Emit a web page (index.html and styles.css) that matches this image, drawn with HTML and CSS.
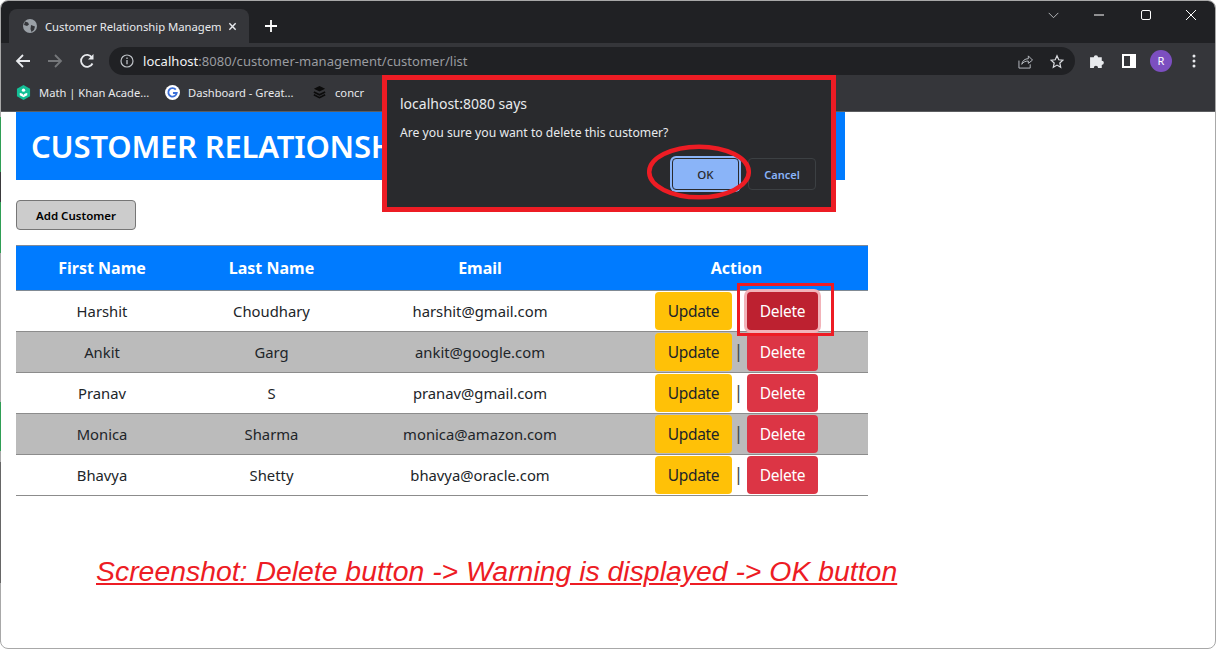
FILE: index.html
```html
<!DOCTYPE html>
<html lang="en">
<head>
<meta charset="utf-8">
<title>Customer Relationship Management</title>
<link rel="stylesheet" href="styles.css">
</head>
<body>
<div class="window">
  <div class="tabstrip">
    <div class="tab">
      <svg class="favicon" viewBox="0 0 16 16"><circle cx="8" cy="8" r="7" fill="#9aa0a6"/><path d="M3 3.500l3 1 1 2-2 1.500-3-1zM9 7l4 1.500-1 3.500-2.500 2-1-3z" fill="#35363a"/></svg>
      <span class="tab-title">Customer Relationship Managem</span>
      <svg class="tab-close" viewBox="0 0 10 10"><path d="M1.500 1.500l7 7M8.500 1.500l-7 7" stroke="#e8eaed" stroke-width="1.600"/></svg>
    </div>
    <svg class="newtab" viewBox="0 0 12 12"><path d="M6 0v12M0 6h12" stroke="#fff" stroke-width="1.800"/></svg>
    <div class="wincontrols">
      <svg class="wc wc-chev" viewBox="0 0 12 8"><path d="M.5 1l5.500 5.500L11.500 1" fill="none" stroke="#c8cacd"/></svg>
      <svg class="wc wc-min" viewBox="0 0 12 12"><path d="M1 6h10" stroke="#fff"/></svg>
      <svg class="wc wc-max" viewBox="0 0 12 12"><rect x="1.500" y="1.500" width="9" height="9" rx="1.500" fill="none" stroke="#fff"/></svg>
      <svg class="wc wc-x" viewBox="0 0 12 12"><path d="M1 1l10 10M11 1L1 11" stroke="#fff"/></svg>
    </div>
  </div>
  <div class="toolbar">
    <svg class="nav" viewBox="0 0 16 16"><path d="M15 8H2M8 2L2 8l6 6" fill="none" stroke="#e8eaed" stroke-width="1.800"/></svg>
    <svg class="nav" viewBox="0 0 16 16"><path d="M1 8h13M8 2l6 6-6 6" fill="none" stroke="#75777a" stroke-width="1.800"/></svg>
    <svg class="nav" viewBox="0 0 16 16"><path d="M13.500 10.500A6 6 0 1 1 13 4.500" fill="none" stroke="#e8eaed" stroke-width="1.800"/><path d="M14.500 1v5.500H9z" fill="#e8eaed"/></svg>
    <div class="omnibox">
      <svg class="info" viewBox="0 0 14 14"><circle cx="7" cy="7" r="6" fill="none" stroke="#bdc1c6" stroke-width="1.200"/><path d="M7 6v4.200M7 3.500v1.400" stroke="#bdc1c6" stroke-width="1.300"/></svg>
      <span class="url"><span class="host">localhost</span>:8080/customer-management/customer/list</span>
      <svg class="omni-ico share" viewBox="0 0 16 16"><path d="M1 7v8h12v-4" fill="none" stroke="#bdc1c6"/><path d="M4 11c.5-4 3.500-6 7-6V2l4.500 4.500L11 10V7.500c-3 0-5.500 1-7 3.500z" fill="none" stroke="#bdc1c6"/></svg>
      <svg class="omni-ico star" viewBox="0 0 16 16"><path d="M8 1.500l2 4.500 4.800.5-3.600 3.200 1 4.800L8 12.100 3.800 14.500l1-4.800L1.200 6.500 6 6z" fill="none" stroke="#dadce0" stroke-width="1.400"/></svg>
    </div>
    <svg class="tool puzzle" viewBox="0 0 16 16"><path d="M1 5h3.500a2 2 0 1 1 4 0H12v3.200a2 2 0 1 1 0 4V15H8.500a2 2 0 1 0-4 0H1z" fill="#e8eaed" transform="translate(0 -1)"/></svg>
    <svg class="tool panel" viewBox="0 0 14 14"><path d="M0 0h14v14H0z" fill="#fff"/><path d="M2 2h6v10H2z" fill="#35363a"/></svg>
    <div class="avatar">R</div>
    <svg class="tool dots" viewBox="0 0 4 14"><circle cx="2" cy="2" r="1.500" fill="#e8eaed"/><circle cx="2" cy="7" r="1.500" fill="#e8eaed"/><circle cx="2" cy="12" r="1.500" fill="#e8eaed"/></svg>
  </div>
  <div class="bookmarks">
    <div class="bm bm-khan">
      <svg class="bm-ico" viewBox="0 0 16 16"><path d="M8 0l7 4v8l-7 4-7-4V4z" fill="#14bf96"/><path d="M4 8.500c2 0 4 1 4 3 0-2 2-3 4-3v2.500l-4 2-4-2z" fill="#fff"/><circle cx="8" cy="5.500" r="1.800" fill="#fff"/></svg>
      <span>Math | Khan Acade...</span>
    </div>
    <div class="bm bm-great">
      <svg class="bm-ico" viewBox="0 0 16 16"><circle cx="8" cy="8" r="8" fill="#fff"/><path d="M11.500 5a4.500 4.500 0 1 0 1 3.500H8.500" fill="none" stroke="#3b6fd8" stroke-width="2"/></svg>
      <span>Dashboard - Great...</span>
    </div>
    <div class="bm bm-concr">
      <svg class="bm-ico" viewBox="0 0 16 16"><path d="M8 1l6 3-6 3-6-3z" fill="#0b0b0b"/><path d="M2 7.500l6 3 6-3M2 10.500l6 3 6-3" fill="none" stroke="#0b0b0b" stroke-width="1.800"/></svg>
      <span>concr</span>
    </div>
  </div>
  <main class="page">
    <header class="banner"><h1>CUSTOMER RELATIONSH</h1></header>
    <button class="add-btn">Add Customer</button>
    <table class="customers">
      <thead>
        <tr><th class="c1">First Name</th><th class="c2">Last Name</th><th class="c3">Email</th><th class="c4">Action</th></tr>
      </thead>
      <tbody>
        <tr><td>Harshit</td><td>Choudhary</td><td>harshit@gmail.com</td><td><div class="actions"><a class="btn update">Update</a><span class="sep"></span><a class="btn delete focused">Delete</a></div></td></tr>
        <tr class="alt"><td>Ankit</td><td>Garg</td><td>ankit@google.com</td><td><div class="actions"><a class="btn update">Update</a><span class="sep">|</span><a class="btn delete">Delete</a></div></td></tr>
        <tr><td>Pranav</td><td>S</td><td>pranav@gmail.com</td><td><div class="actions"><a class="btn update">Update</a><span class="sep">|</span><a class="btn delete">Delete</a></div></td></tr>
        <tr class="alt"><td>Monica</td><td>Sharma</td><td>monica@amazon.com</td><td><div class="actions"><a class="btn update">Update</a><span class="sep">|</span><a class="btn delete">Delete</a></div></td></tr>
        <tr><td>Bhavya</td><td>Shetty</td><td>bhavya@oracle.com</td><td><div class="actions"><a class="btn update">Update</a><span class="sep">|</span><a class="btn delete">Delete</a></div></td></tr>
      </tbody>
    </table>
    <p class="caption">Screenshot: Delete button -&gt; Warning is displayed -&gt; OK button</p>
  </main>

  <div class="left-edge"></div>
  <div class="dialog">
    <div class="dlg-title">localhost:8080 says</div>
    <div class="dlg-msg">Are you sure you want to delete this customer?</div>
    <div class="dlg-actions">
      <button class="dlg-ok">OK</button>
      <button class="dlg-cancel">Cancel</button>
    </div>
    <svg class="ok-ring" viewBox="0 0 104 56"><ellipse cx="52" cy="28" rx="49.800" ry="25.300" fill="none" stroke="#ed1c24" stroke-width="4.500"/></svg>
  </div>
  <div class="delete-mark"></div>
</div>
</body>
</html>
```
FILE: styles.css
```css
* { box-sizing: border-box; }
html, body { margin: 0; padding: 0; background: #fff; }
body { width: 1216px; height: 649px; overflow: hidden; font-family: "Noto Sans", "Open Sans", sans-serif; }
.window { position: relative; width: 1216px; height: 649px; background: #fff; border-radius: 8px; border: 1px solid #a8a8a8; display: flex; flex-direction: column; }

.tabstrip { height: 42px; flex: none; background: #202124; border-radius: 7px 7px 0 0; display: flex; align-items: flex-start; padding: 8px 0 0 8px; }
.tab { width: 240px; height: 34px; background: #35363a; border-radius: 8px 8px 0 0; display: flex; align-items: center; padding: 0 0 0 13px; flex: none; }
.favicon { width: 16px; height: 16px; flex: none; }
.tab-title { font-size: 11.300px; color: #e8eaed; margin-left: 7px; width: 176px; white-space: nowrap; overflow: hidden; letter-spacing: -.03px; }
.tab-close { width: 9px; height: 9px; margin-left: 7px; flex: none; }
.newtab { width: 12px; height: 12px; margin: 11px 0 0 16px; flex: none; }
.wincontrols { margin-left: auto; display: flex; align-items: center; height: 14px; margin-top: -1px; padding-right: 18px; }
.wc { display: block; }
.wc-chev { width: 11px; height: 7px; margin-right: 34px; }
.wc-min { width: 12px; height: 12px; margin-right: 35px; }
.wc-max { width: 12px; height: 12px; margin-right: 33px; }
.wc-x { width: 12px; height: 12px; }

.toolbar { height: 36px; flex: none; background: #35363a; display: flex; align-items: center; padding: 0 0 0 14px; }
.nav { width: 16px; height: 16px; margin-right: 16px; flex: none; }
.omnibox { width: 966px; height: 28px; margin-left: -2px; background: #202124; border-radius: 14px; display: flex; align-items: center; padding: 0 10px 0 11px; flex: none; }
.info { width: 14px; height: 14px; flex: none; }
.url { font-size: 13px; color: #9a9ca0; margin-left: 9px; white-space: nowrap; letter-spacing: .04px; }
.host { color: #f1f3f4; }
.omni-ico { width: 15px; height: 15px; flex: none; }
.share { margin-left: auto; }
.star { margin-left: 17px; padding-right: 1px; }
.tool { flex: none; }
.puzzle { width: 17px; height: 17px; margin-left: 14px; }
.panel { width: 14px; height: 14px; margin-left: 16px; }
.avatar { width: 22px; height: 22px; border-radius: 50%; background: #7c4fc0; color: #fff; font-size: 11px; line-height: 22px; text-align: center; margin-left: 14px; flex: none; }
.dots { width: 4px; height: 14px; margin-left: 20px; }

.bookmarks { height: 33px; flex: none; background: #35363a; display: flex; align-items: center; padding: 0 0 5px 15px; border-bottom: 1px solid #5c5d60; font-size: 11.200px; color: #e8eaed; }
.bm { display: flex; align-items: center; white-space: nowrap; }
.bm-ico { width: 15px; height: 15px; flex: none; margin-right: 8px; }
.bm-khan { width: 149px; }
.bm-great { width: 147px; }

.page { flex: 1; padding: 0 0 0 15px; color: #212529; min-height: 0; }
.banner { width: 829px; height: 68px; background: #007bff; display: flex; align-items: center; padding: 1px 0 0 15px; overflow: hidden; }
.banner h1 { margin: 0; color: #fff; font-size: 31px; font-weight: 600; line-height: 1; white-space: nowrap; letter-spacing: -.2px; }
.add-btn { display: block; margin: 20px 0 15px; width: 120px; height: 30px; background: #ccc; border: 1px solid #767676; border-radius: 4px; color: #000; font: 600 11.500px "Noto Sans", sans-serif; padding: 0; }
.customers { border-collapse: collapse; table-layout: fixed; width: 852px; font-size: 14.800px; text-align: center; }
.customers th { height: 45px; padding: 0 0 1px; background: #007bff; color: #fff; font-size: 16px; font-weight: 700; border-top: 1px solid #7f8a99; border-bottom: 1px solid #808a94; }
.c1 { width: 172px; }
.c2 { width: 167px; }
.c3 { width: 250px; }
.c4 { width: 263px; }
.customers td { height: 41px; padding: 0; border-bottom: 1px solid #8c8c8c; }
.alt td { background: #bbb; }
.actions { display: flex; align-items: center; padding-left: 50px; height: 40px; }
.btn { display: block; height: 38px; line-height: 38px; border-radius: 4px; font-size: 15.500px; text-align: center; flex: none; letter-spacing: -.3px; }
.update { width: 77px; background: #ffc107; color: #212529; }
.delete { width: 71px; background: #dc3545; color: #fff; }
.focused { background: #bd2130; box-shadow: 0 0 0 3px #f2b3b9; position: relative; }
.sep { width: 15px; text-align: center; font-size: 18px; flex: none; line-height: 36px; height: 38px; padding-right: 2px; color: #3f4a48; }
.caption { margin: 59px 0 0 80px; width: 802px; font: italic 28.400px "Liberation Sans", sans-serif; color: #ed1c24; text-decoration: underline; white-space: nowrap; }

.left-edge { position: absolute; left: -1px; top: 116px; width: 1px; height: 525px; background: linear-gradient(#2f9e55 0 55px, #3a3a3c 55px 85px, #2f9e55 85px 136px, #a8a8a8 136px 285px, #2f9e55 285px 334px, #a8a8a8 334px 345px, #666 345px 466px, #a8a8a8 466px); }

.dialog { position: absolute; left: 381px; top: 74px; width: 454px; height: 137px; background: #292a2d; border: 5px solid #ed1c24; color: #e8eaed; padding: 14px 13px 0 13px; }
.dlg-title { font-size: 14px; line-height: 20px; }
.dlg-msg { font-size: 12.200px; line-height: 16px; margin-top: 11px; }
.dlg-actions { display: flex; justify-content: flex-end; gap: 7px; margin-top: 17px; padding-right: 2px; }
.dlg-ok, .dlg-cancel { height: 32px; border-radius: 4px; font: 600 11px "Noto Sans", sans-serif; padding: 0; }
.dlg-ok { width: 67px; margin-right: 2px; background: #8ab4f8; color: #292a2d; border: 1px solid #292a2d; box-shadow: 0 0 0 2px #8ab4f8; font-weight: 500; font-size: 11.500px; }
.dlg-cancel { width: 68px; background: transparent; color: #8ab4f8; border: 1px solid #3c4043; }
.ok-ring { position: absolute; left: 260px; top: 64px; width: 104px; height: 56px; }
.delete-mark { position: absolute; left: 736px; top: 282px; width: 97px; height: 53px; border: 3px solid #ed1c24; }
```
